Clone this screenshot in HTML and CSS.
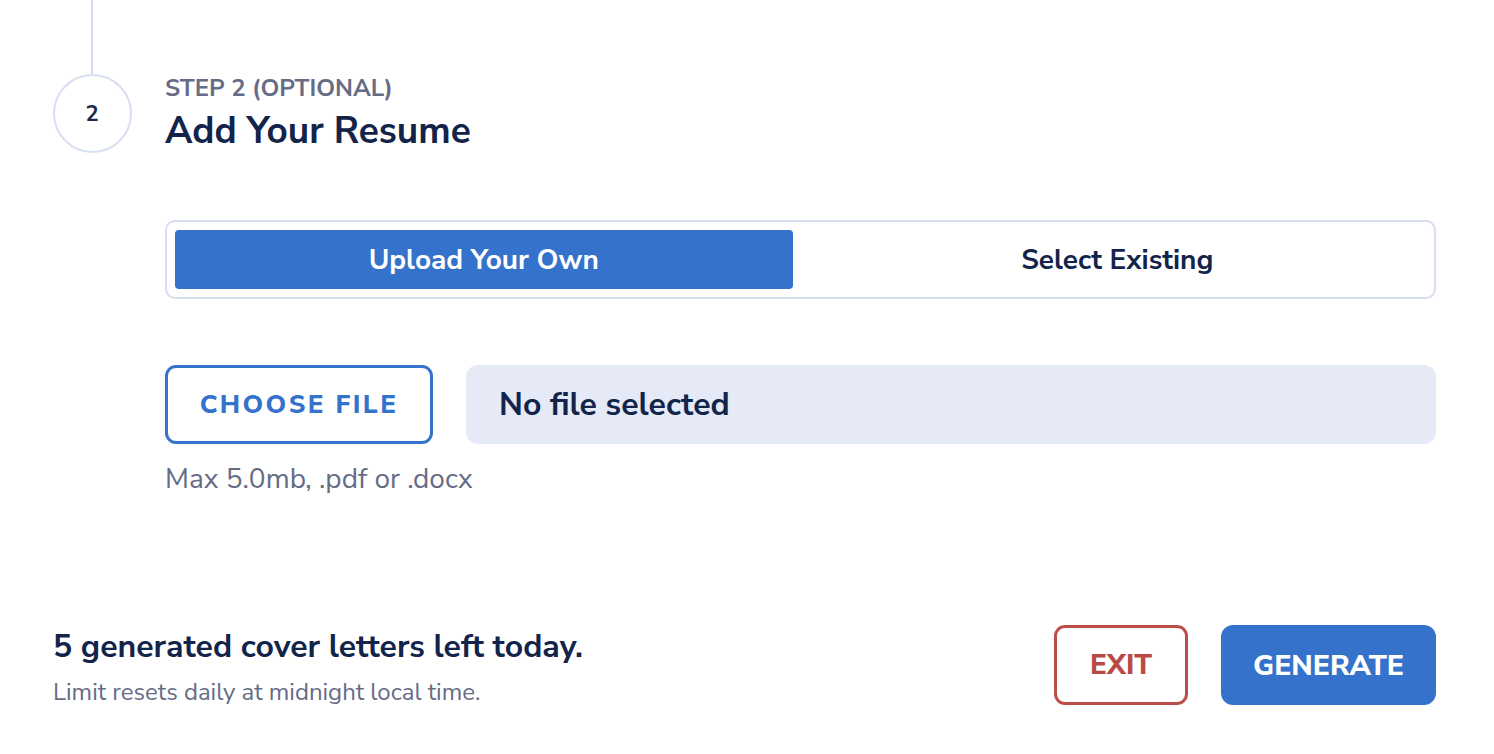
FILE: index.html
```html
<!DOCTYPE html>
<html lang="en">
<head>
<meta charset="utf-8">
<title>Add Your Resume</title>
<link rel="stylesheet" href="styles.css">
</head>
<body>
<div class="page">
  <section class="step">
    <div class="rail">
      <div class="rail-line"></div>
      <div class="step-circle">2</div>
    </div>
    <div class="step-body">
      <div class="step-head">
        <div class="step-label">STEP 2 (OPTIONAL)</div>
        <h2 class="step-title">Add Your Resume</h2>
      </div>
      <div class="toggle">
        <button class="toggle-btn active">Upload Your Own</button>
        <button class="toggle-btn">Select Existing</button>
      </div>
      <div class="file-row">
        <button class="choose-btn">CHOOSE FILE</button>
        <div class="file-name">No file selected</div>
      </div>
      <div class="file-hint">Max 5.0mb, .pdf or .docx</div>
    </div>
  </section>
  <footer class="footer">
    <div class="quota">
      <div class="quota-title">5 generated cover letters left today.</div>
      <div class="quota-sub">Limit resets daily at midnight local time.</div>
    </div>
    <div class="actions">
      <button class="btn-exit">EXIT</button>
      <button class="btn-generate">GENERATE</button>
    </div>
  </footer>
</div>
</body>
</html>
```

FILE: styles.css
```css
* { box-sizing: border-box; }
html, body { margin: 0; padding: 0; background: #ffffff; }
body {
  font-family: "Nunito Sans", Lato, "Noto Sans", sans-serif;
  color: #13244b;
}
button { font-family: inherit; cursor: pointer; }

.page {
  width: 1494px;
  height: 754px;
  padding: 0 58px 0 53px;
  display: flex;
  flex-direction: column;
}

.step {
  display: flex;
  gap: 34px;
}

.rail {
  width: 78px;
  flex: none;
  display: flex;
  flex-direction: column;
  align-items: center;
}
.rail-line {
  width: 2px;
  height: 74px;
  background: #d3dcef;
}
.step-circle {
  width: 79px;
  height: 79px;
  border: 2px solid #d7dff0;
  border-radius: 50%;
  display: flex;
  align-items: center;
  justify-content: center;
  font-size: 22px;
  font-weight: 700;
  color: #1c2a4c;
}

.step-body {
  flex: 1;
  padding-top: 72px;
}
.step-label {
  font-size: 24px;
  font-weight: 700;
  color: #666c86;
  line-height: 32px;
}
.step-title {
  margin: 0;
  font-size: 37px;
  font-weight: 700;
  color: #13244b;
  line-height: 54px;
}

.toggle {
  margin-top: 62px;
  height: 79px;
  border: 2px solid #d6def0;
  border-radius: 10px;
  padding: 8px;
  display: grid;
  grid-template-columns: 1fr 1fr;
  gap: 16px;
}
.toggle-btn {
  border: 0;
  border-radius: 4px;
  background: transparent;
  font-size: 28px;
  font-weight: 700;
  color: #13244b;
}
.toggle-btn.active {
  background: #3572cb;
  color: #ffffff;
}

.file-row {
  margin-top: 66px;
  display: flex;
  gap: 33px;
  height: 79px;
}
.choose-btn {
  width: 268px;
  flex: none;
  background: #fff;
  border: 3px solid #3572cb;
  border-radius: 11px;
  color: #3572cb;
  font-size: 26px;
  font-weight: 800;
  letter-spacing: 2.4px;
}
.file-name {
  flex: 1;
  background: #e5eaf6;
  border-radius: 12px;
  display: flex;
  align-items: center;
  padding-left: 33px;
  font-size: 32px;
  font-weight: 700;
  color: #13244b;
}
.file-hint {
  margin-top: 16px;
  font-size: 28px;
  line-height: 38px;
  color: #666c86;
}

.footer {
  margin-top: auto;
  margin-bottom: 49px;
  display: flex;
  justify-content: space-between;
  align-items: flex-end;
}
.quota {
  margin-bottom: -3px;
}
.quota-title {
  font-size: 32px;
  font-weight: 700;
  line-height: 44px;
  color: #13244b;
}
.quota-sub {
  margin-top: 7px;
  font-size: 24px;
  line-height: 32px;
  color: #666c86;
}
.actions {
  display: flex;
  gap: 33px;
}
.btn-exit {
  width: 134px;
  height: 80px;
  background: #fff;
  border: 3px solid #bd4d48;
  border-radius: 11px;
  color: #b94a45;
  font-size: 28px;
  font-weight: 800;
}
.btn-generate {
  width: 215px;
  height: 80px;
  background: #3572cb;
  border: 0;
  border-radius: 12px;
  color: #fff;
  font-size: 28.5px;
  font-weight: 800;
}
```
